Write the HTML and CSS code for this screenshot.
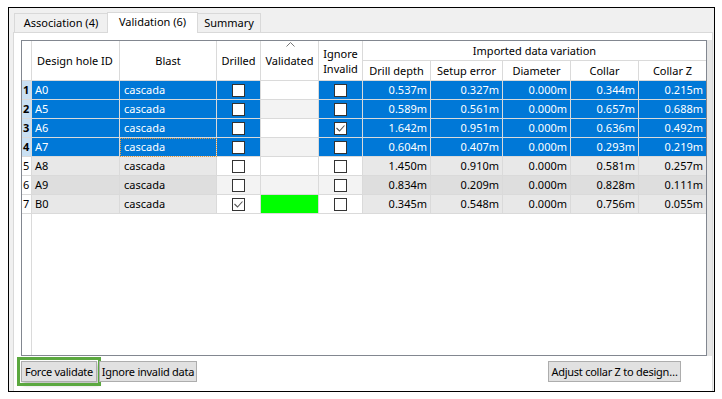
FILE: index.html
```html
<!DOCTYPE html>
<html lang="en">
<head>
    <meta charset="UTF-8">
    <title>Validation</title>
    <link rel="stylesheet" href="styles.css">
</head>
<body>
    <div class="window">
        <div class="tabbar">
            <div class="tab first">Association (4)</div>
            <div class="tab active">Validation (6)</div>
            <div class="tab">Summary</div>
        </div>
        <div class="page">
            <div class="view">
                <div class="grid-box">
                    <table class="grid">
                        <colgroup>
                            <col style="width:10px">
                            <col style="width:88px">
                            <col style="width:97px">
                            <col style="width:44px">
                            <col style="width:58px">
                            <col style="width:44px">
                            <col style="width:68px">
                            <col style="width:72px">
                            <col style="width:68px">
                            <col style="width:68px">
                            <col style="width:67px">
                        </colgroup>
                        <tr class="head">
                            <th rowspan="2" class="rh"></th>
                            <th rowspan="2" class="left">Design hole ID</th>
                            <th rowspan="2">Blast</th>
                            <th rowspan="2">Drilled</th>
                            <th rowspan="2" class="sorted">
                                <svg class="sort" width="9" height="5" viewBox="0 0 9 5"><polyline points="0.5,4.5 4.5,0.5 8.5,4.5" fill="none" stroke="#777" stroke-width="1"/></svg>
                                Validated
                            </th>
                            <th rowspan="2" class="two">Ignore<br>Invalid</th>
                            <th colspan="5" class="last">Imported data variation</th>
                        </tr>
                        <tr class="head">
                            <th>Drill depth</th>
                            <th>Setup error</th>
                            <th>Diameter</th>
                            <th>Collar</th>
                            <th class="last">Collar Z</th>
                        </tr>

                        <tr class="sel odd">
                            <td class="rh">1</td>
                            <td class="ro">A0</td>
                            <td class="ro txt">cascada</td>
                            <td class="ed c"><span class="cb"></span></td>
                            <td class="val"></td>
                            <td class="ed c"><span class="cb"></span></td>
                            <td class="ro num">0.537m</td>
                            <td class="ro num">0.327m</td>
                            <td class="ro num">0.000m</td>
                            <td class="ro num">0.344m</td>
                            <td class="ro num last">0.215m</td>
                        </tr>
                        <tr class="sel even">
                            <td class="rh">2</td>
                            <td class="ro">A5</td>
                            <td class="ro txt">cascada</td>
                            <td class="ed c"><span class="cb"></span></td>
                            <td class="val"></td>
                            <td class="ed c"><span class="cb"></span></td>
                            <td class="ro num">0.589m</td>
                            <td class="ro num">0.561m</td>
                            <td class="ro num">0.000m</td>
                            <td class="ro num">0.657m</td>
                            <td class="ro num last">0.688m</td>
                        </tr>
                        <tr class="sel odd">
                            <td class="rh">3</td>
                            <td class="ro">A6</td>
                            <td class="ro txt">cascada</td>
                            <td class="ed c"><span class="cb"></span></td>
                            <td class="val"></td>
                            <td class="ed c"><span class="cb"><svg width="11" height="11" viewBox="0 0 11 11"><polyline points="1.5,5 4.5,8 9.5,2.5" fill="none" stroke="#555" stroke-width="1.1"/></svg></span></td>
                            <td class="ro num">1.642m</td>
                            <td class="ro num">0.951m</td>
                            <td class="ro num">0.000m</td>
                            <td class="ro num">0.636m</td>
                            <td class="ro num last">0.492m</td>
                        </tr>
                        <tr class="sel even">
                            <td class="rh">4</td>
                            <td class="ro">A7</td>
                            <td class="ro txt focus">cascada</td>
                            <td class="ed c"><span class="cb"></span></td>
                            <td class="val"></td>
                            <td class="ed c"><span class="cb"></span></td>
                            <td class="ro num">0.604m</td>
                            <td class="ro num">0.407m</td>
                            <td class="ro num">0.000m</td>
                            <td class="ro num">0.293m</td>
                            <td class="ro num last">0.219m</td>
                        </tr>
                        <tr class="odd">
                            <td class="rh">5</td>
                            <td class="ro">A8</td>
                            <td class="ro txt">cascada</td>
                            <td class="ed c"><span class="cb"></span></td>
                            <td class="val"></td>
                            <td class="ed c"><span class="cb"></span></td>
                            <td class="ro num">1.450m</td>
                            <td class="ro num">0.910m</td>
                            <td class="ro num">0.000m</td>
                            <td class="ro num">0.581m</td>
                            <td class="ro num last">0.257m</td>
                        </tr>
                        <tr class="even">
                            <td class="rh">6</td>
                            <td class="ro">A9</td>
                            <td class="ro txt">cascada</td>
                            <td class="ed c"><span class="cb"></span></td>
                            <td class="val"></td>
                            <td class="ed c"><span class="cb"></span></td>
                            <td class="ro num">0.834m</td>
                            <td class="ro num">0.209m</td>
                            <td class="ro num">0.000m</td>
                            <td class="ro num">0.828m</td>
                            <td class="ro num last">0.111m</td>
                        </tr>
                        <tr class="odd">
                            <td class="rh">7</td>
                            <td class="ro">B0</td>
                            <td class="ro txt">cascada</td>
                            <td class="ed c"><span class="cb"><svg width="11" height="11" viewBox="0 0 11 11"><polyline points="1.5,5 4.5,8 9.5,2.5" fill="none" stroke="#555" stroke-width="1.1"/></svg></span></td>
                            <td class="val ok"></td>
                            <td class="ed c"><span class="cb"></span></td>
                            <td class="ro num">0.345m</td>
                            <td class="ro num">0.548m</td>
                            <td class="ro num">0.000m</td>
                            <td class="ro num">0.756m</td>
                            <td class="ro num last">0.055m</td>
                        </tr>
                    </table>
                </div>
                <div class="strip"></div>
            </div>
            <div class="buttons">
                <button class="btn focused">Force validate</button>
                <button class="btn ignore">Ignore invalid data</button>
                <button class="btn adjust">Adjust collar Z to design…</button>
            </div>
        </div>
    </div>
</body>
</html>
```

FILE: styles.css
```css
body {
    margin: 0;
    padding: 7px 0 0 8px;
    background-color: #fff;
    font-family: "Noto Sans", "Segoe UI", sans-serif;
    font-size: 11px;
    color: #000;
}

.window {
    width: 705px;
    height: 383px;
    border: 1px solid #000;
    background-color: #f0f0f0;
    display: flex;
    flex-direction: column;
}

/* tabs */

.tabbar {
    height: 24px;
    padding-left: 5px;
    display: flex;
    align-items: flex-end;
}

.tab {
    box-sizing: border-box;
    height: 19px;
    line-height: 17px;
    border: 1px solid #d9d9d9;
    border-bottom: none;
    background-color: #f0f0f0;
    text-align: center;
    margin-left: -1px;
}

.tab.first {
    width: 94px;
    margin-left: 0;
}

.tab.active {
    width: 91px;
    height: 21px;
    line-height: 18px;
    margin-bottom: -1px;
    background-color: #fff;
    position: relative;
    z-index: 1;
}

.tab:last-child {
    width: 64px;
}

.page {
    flex: 1;
    margin-left: 4px;
    width: 700px;
    box-sizing: border-box;
    border: 1px solid #d9d9d9;
    border-bottom: none;
    background-color: #fff;
    padding: 7px 0 0 7px;
}

/* table view */

.view {
    display: flex;
    height: 316px;
}

.grid-box {
    box-sizing: border-box;
    width: 686px;
    border: 1px solid #828790;
    background: linear-gradient(to right, #fff 0, #fff 9px, #dadada 9px, #dadada 10px, #fff 10px);
}

.strip {
    flex: 1;
    background-color: #e6e6e6;
}

.grid {
    table-layout: fixed;
    width: 684px;
    border-collapse: separate;
    border-spacing: 0;
}

.grid th,
.grid td {
    padding: 0;
    border-right: 1px solid #dadada;
    border-bottom: 1px solid #dadada;
    white-space: nowrap;
    overflow: hidden;
    font-weight: normal;
}

.grid .last {
    border-right: none;
}

.head th {
    height: 19px;
    background-color: #fff;
    text-align: center;
    vertical-align: middle;
}

.head th.left {
    text-align: left;
    padding-left: 5px;
}

.head th.two {
    line-height: 15px;
    padding-top: 1px;
}

.head th.sorted {
    position: relative;
}

.sort {
    position: absolute;
    top: 1px;
    left: 25px;
}

.grid tr:not(.head) td {
    height: 18px;
    line-height: 18px;
}

.grid td.rh {
    background-color: #fff;
    padding-left: 1px;
}

.grid td.ro {
    padding-left: 3px;
}

.grid td.txt {
    padding-left: 4px;
}

.grid td.num {
    text-align: right;
    padding-right: 3px;
    padding-left: 0;
}

.grid td.c {
    text-align: center;
}

.odd td.ro {
    background-color: #e8e8e8;
}

.even td.ro {
    background-color: #dedede;
}

.odd td.ed,
.odd td.val {
    background-color: #fff;
}

.even td.ed,
.even td.val {
    background-color: #f3f3f3;
}

.grid td.val.ok {
    background-color: #00ff00;
}

.sel td.ro,
.sel td.ed {
    background-color: #0078d7;
    color: #fff;
}

.grid .sel td.rh {
    background-color: #c9e0f3;
    font-weight: bold;
}

.grid td.focus {
    outline: 1px dotted #e89a3c;
    outline-offset: -1px;
}

.cb {
    display: inline-block;
    box-sizing: border-box;
    width: 13px;
    height: 13px;
    border: 1px solid #333;
    background-color: #fff;
    vertical-align: middle;
    margin-top: -2px;
    line-height: 0;
}

/* buttons */

.buttons {
    display: flex;
    margin-top: 5px;
    padding-right: 31px;
}

.btn {
    height: 21px;
    box-sizing: border-box;
    border: 1px solid #adadad;
    background-color: #e1e1e1;
    font-family: "Noto Sans", "Segoe UI", sans-serif;
    font-size: 11px;
    letter-spacing: -0.25px;
    color: #000;
    padding: 0 1px;
    white-space: nowrap;
    overflow: visible;
}

.btn.focused {
    width: 76px;
    outline: 3px solid #5ba83f;
    outline-offset: 1px;
    box-shadow: 2px 3px 4px rgba(0, 0, 0, 0.25);
}

.btn.ignore {
    width: 98px;
    margin-left: 2px;
}

.btn.adjust {
    width: 133px;
    margin-left: auto;
}
```
